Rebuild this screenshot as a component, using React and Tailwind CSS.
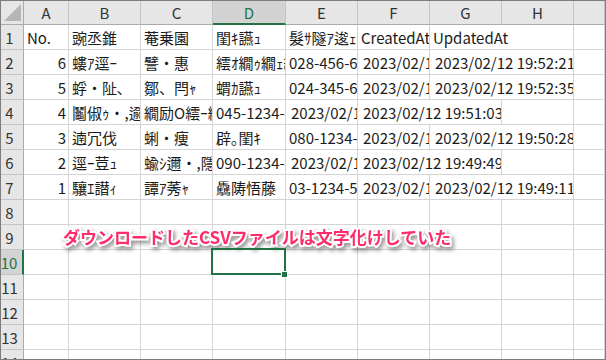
const GRID = "grid grid-cols-[23px_45px_72px_72px_73px_72px_72px_72px_72px_31px]";
const LETTERS = ["A", "B", "C", "D", "E", "F", "G", "H", ""];

// sheet contents (mojibake as shown by Excel), span = text runs into the empty cell on the right
const rows = [
  ["No.", "豌丞錐", "菴乗園", "閨ｷ讌ｭ", "髮ｻ隧ｱ逡ｪ蜿ｷ", "CreatedAt", { t: "UpdatedAt", span: 2 }],
  [{ t: "6", r: true }, "螻ｱ逕ｰ", "譬・惠", "繧ｵ繝ｩ繝ｪ繝ｼ繝槭Φ", "028-456-6789", { t: "2023/02/12 19:52:21", d: true }, { t: "2023/02/12 19:52:21", span: 2, d: true }],
  [{ t: "5", r: true }, "蜉・阯､", "鄒、閂ｬ", "蝟ｶ讌ｭ", "024-345-6789", { t: "2023/02/12 19:52:35", d: true }, { t: "2023/02/12 19:52:35", span: 2, d: true }],
  [{ t: "4", r: true }, "鬮俶ｩ・,逾槫･亥ｷ晁ｨ・", "繝励Ο繧ｰ繝ｩ繝槭・", "045-1234-5678", { t: "2023/02/12 19:51:03", d: true }, { t: "2023/02/12 19:51:03", span: 2, d: true }],
  [{ t: "3", r: true }, "遖冗伐", "蜊・痩", "辟｡閨ｷ", "080-1234-5678", { t: "2023/02/12 19:50:28", d: true }, { t: "2023/02/12 19:50:28", span: 2, d: true }],
  [{ t: "2", r: true }, "逕ｰ荳ｭ", "蝓ｼ邇・,隱ｿ逅・ｸｫ", "090-1234-5678", { t: "2023/02/12 19:49:49", d: true }, { t: "2023/02/12 19:49:49", span: 2, d: true }],
  [{ t: "1", r: true }, "驤ｴ譛ｨ", "譚ｱ莠ｬ", "驫陦悟藤", "03-1234-5678", { t: "2023/02/12 19:49:11", d: true }, { t: "2023/02/12 19:49:11", span: 2, d: true }],
];

const fillRow = (cells) => {
  const out = cells.map((c) => (typeof c === "string" ? { t: c, span: 1 } : { span: 1, ...c }));
  let used = out.reduce((s, c) => s + c.span, 0);
  while (used < 9) {
    out.push({ t: "", span: 1 });
    used++;
  }
  return out;
};

const Cell = ({ cell, selected }) => (
  <div
    className={`relative flex items-center whitespace-pre border-r border-b border-[#d4d4d4] text-[15px] text-[#1b1b1b] ${
      cell.r ? "justify-end pr-[2px]" : cell.d ? "pl-[5px]" : "pl-[3px]"
    } ${cell.span === 2 ? "col-span-2" : ""} ${selected ? "z-10 overflow-visible" : "overflow-hidden"}`}
  >
    {cell.t}
    {selected && (
      <>
        <div className="absolute -left-[2px] -top-[2px] -right-[1px] -bottom-[1px] border-2 border-[#217346]" />
        <div className="absolute -right-[3px] -bottom-[4px] w-[7px] h-[7px] bg-[#217346] border border-white" />
      </>
    )}
  </div>
);

const RowHead = ({ n, active }) => (
  <div
    className={`flex items-center justify-center pr-[5px] border-b border-[#c4c4c4] text-[15px] ${
      active ? "bg-[#d3d3d3] text-[#217346] border-r-2 border-r-[#217346]" : "bg-[#e6e6e6] text-[#333] border-r border-r-[#ababab]"
    }`}
  >
    {n}
  </div>
);

export default function App() {
  return (
    <div className="relative w-[606px] h-[360px] overflow-hidden border border-[#7d7d7d] bg-white font-['Noto_Sans_CJK_JP',sans-serif] leading-none">
      {/* column headers */}
      <div className={`${GRID} h-[24px]`}>
        <div className="relative bg-[#e6e6e6] border-r border-b border-[#ababab]">
          <svg className="absolute left-[3px] top-[3px]" width="17" height="17" viewBox="0 0 17 17">
            <polygon points="17,0 17,17 0,17" fill="#b6b6b6" />
          </svg>
        </div>
        {LETTERS.map((l, i) => (
          <div
            key={i}
            className={`flex items-center justify-center text-[15px] border-r border-r-[#c4c4c4] ${
              l === "D" ? "bg-[#d3d3d3] text-[#217346] border-b-2 border-b-[#217346]" : "bg-[#e6e6e6] text-[#333] border-b border-b-[#ababab]"
            }`}
          >
            {l}
          </div>
        ))}
      </div>

      {/* data rows */}
      {Array.from({ length: 14 }, (_, i) => {
        const cells = fillRow(rows[i] || []);
        return (
          <div key={i} className={`${GRID} h-[25px]`}>
            <RowHead n={i + 1} active={i === 9} />
            {cells.map((c, j) => (
              <Cell key={j} cell={c} selected={i === 9 && j === 3} />
            ))}
          </div>
        );
      })}

      {/* annotation */}
      <div className="absolute left-[62px] top-[227px] text-[17px] font-bold text-[#fd2d6c] whitespace-nowrap [-webkit-text-stroke:4px_white] [paint-order:stroke_fill] drop-shadow-[2px_3px_2px_rgba(0,0,0,0.4)]">
        ダウンロードしたCSVファイルは文字化けしていた
      </div>
    </div>
  );
}
